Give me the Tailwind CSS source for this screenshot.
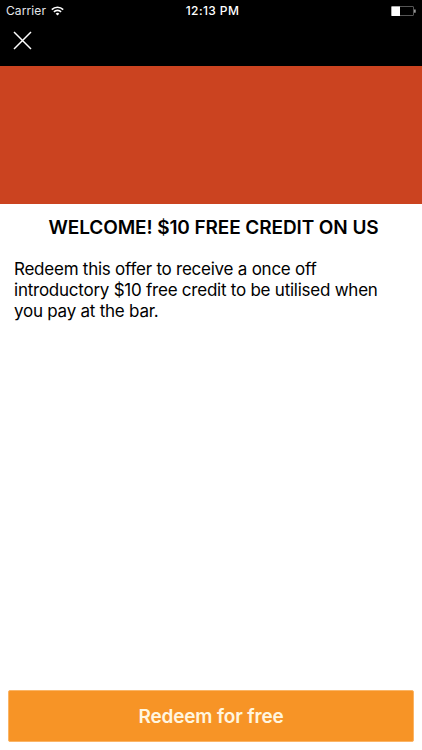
<!DOCTYPE html>
<html lang="en">
<head>
  <meta charset="UTF-8" />
  <meta name="viewport" content="width=device-width, initial-scale=1.0" />
  <title>Redeem Offer</title>
  <script src="https://cdn.jsdelivr.net/npm/@tailwindcss/browser@4"></script>
</head>
<body class="bg-white font-['Inter',sans-serif] h-screen flex flex-col overflow-hidden">
  <header class="bg-black text-white h-[66px] shrink-0">
    <!-- Status bar -->
    <div class="grid grid-cols-3 items-center h-[22px] px-1.5">
      <div class="flex items-center gap-[5px]">
        <span class="text-[12px] leading-none tracking-[0.1px] text-gray-200">Carrier</span>
        <svg class="w-[13px] h-[10px] mb-px" viewBox="0 0 13 10" fill="none" stroke="#fff" stroke-width="1.6">
          <path d="M0.8 3.6a8.2 8.2 0 0 1 11.4 0" />
          <path d="M2.9 5.9a5.1 5.1 0 0 1 7.2 0" />
          <path d="M6.5 9.6L4.7 7.7a2.6 2.6 0 0 1 3.6 0z" fill="#fff" stroke="none" />
        </svg>
      </div>
      <span class="pl-[3px] text-center text-[12px] leading-none font-medium tracking-[0.4px] whitespace-nowrap">12:13 PM</span>
      <svg class="justify-self-end w-[26px] h-[11px]" viewBox="0 0 26 11">
        <rect x="1.5" y="0.5" width="22" height="9" rx="0.5" fill="none" stroke="#555" />
        <rect x="1.5" y="0.5" width="8.5" height="9.5" fill="#fff" />
        <rect x="24" y="3.5" width="1.7" height="3.2" fill="#999" />
      </svg>
    </div>
    <button id="closeBtn" class="block ml-[13px] mt-[9px]" aria-label="Close">
      <svg class="w-[19px] h-[19px]" viewBox="0 0 19 19" fill="none" stroke="#fff" stroke-width="1.5">
        <path d="M1 1l17 17M18 1L1 18" />
      </svg>
    </button>
  </header>

  <div class="bg-[#cb4320] h-[138px] shrink-0"></div>

  <main class="flex-1 px-3.5 pt-3">
    <h1 class="pl-[5px] text-center text-[19px] leading-[23px] font-semibold tracking-[-0.1px] text-black whitespace-nowrap">WELCOME! $10 FREE CREDIT ON US</h1>
    <p class="mt-5 text-[17px] leading-[21px] tracking-[-0.24px] text-black">
      Redeem this offer to receive a once off<br />
      introductory $10 free credit to be utilised when<br />
      you pay at the bar.
    </p>
  </main>

  <div class="px-2 pb-2">
    <button id="redeemBtn" class="w-full h-[52px] pt-0.5 rounded-xs bg-[#f79426] border border-[#fbb566] text-[#fff6e0] text-[19px] font-semibold tracking-[-0.15px]">Redeem for free</button>
  </div>
</body>
</html>
